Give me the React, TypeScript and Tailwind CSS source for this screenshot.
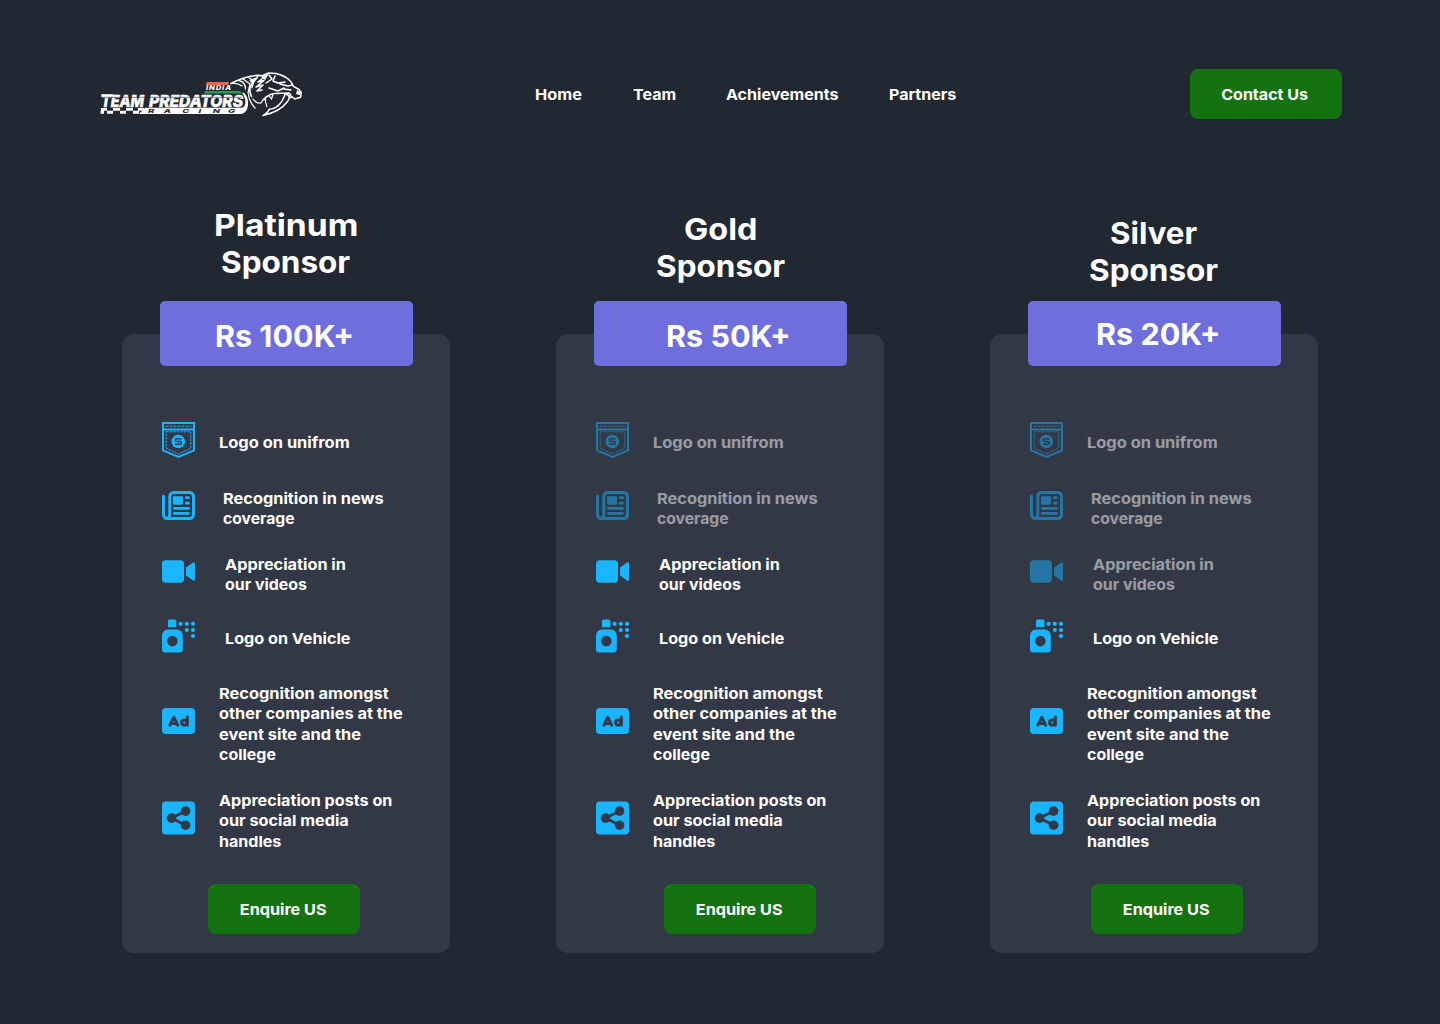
import React from "react";

type Line = [text: string, className: string];

function Logo() {
  return (
    <svg className="block h-[50px] w-[204px]" viewBox="100 70 204 50" fill="none">
      <path d="M207 82h22l-1.200 3H205.600z" fill="#e0703f" />
      <text transform="translate(206 90.200) scale(1.350 1)" fontFamily="Inter" fontWeight="800" fontStyle="italic" fontSize="5.600" textLength="18.500" lengthAdjust="spacing" fill="#fff">INDIA</text>
      <path d="M205 91h35l2.500 2.600H204z" fill="#2f9a55" />
      <g fill="#fff" stroke="#fff" strokeWidth=".5" fontFamily="Inter" fontWeight="800" fontStyle="italic" fontSize="16.500">
        <text x="101" y="106.600" textLength="43" lengthAdjust="spacingAndGlyphs">TEAM</text>
        <text x="149" y="106.600" textLength="94" lengthAdjust="spacingAndGlyphs">PREDATORS</text>
      </g>
      <path d="M101.500 94.300h12l-.600 2.400h-12z" fill="#fff" />
      <path d="M100 97.300h142" stroke="#222831" strokeWidth=".6" />
      <path d="M101 108h6v2.800h-6zM113 108h7v2.800h-7zM126 108h7v2.800h-7zM138 108h6v2.800h-6zM107 110.800h6v2.900h-6zM120 110.800h6v2.900h-6zM133 110.800h6v2.900h-6zM100.500 110.800h3.500v2.900h-3.500z" fill="#fff" />
      <path d="M145 107.800h96c3.500-.300 4.600-2.800 4.300-6.500-.200-3.500-1.300-6-3.300-8.300l1.800-.200c2.800 2.700 4.300 5.700 4.300 10 0 6.500-2.500 11-7.600 11.200H139z" fill="#fff" />
      <text transform="translate(148 112.800) scale(1.800 1)" x="0 8.700 19 28 36 44.500" fontFamily="Inter" fontWeight="800" fontStyle="italic" fontSize="5.200" fill="#222831">RACING</text>
      <g stroke="#fff" strokeLinecap="round" strokeLinejoin="round">
        <path d="M231 83.500c8-4.500 17-7.300 26-8.200l5 .500 6-2.700 8 .300c6 1.500 12 4.300 15 8.500l2.500 4.500 5.500 3.100 2.300 3-.800 4.800-5.500 1.700-3.500-2.300-2.800 2" strokeWidth="1.500" />
        <path d="M231 83.600c4-.5 8 .1 11 2.300M239 80.500c4 1 6.500 3.500 6.500 8.500M243 79l7 5-2 9M249 77.800l5 3-2 7" strokeWidth="1.300" />
        <path d="M258 76c-2 4.500-7 6.500-8 12-.700 4 .500 6 1.500 8.500M264 77l-6 5 6-1.500-8 6.500 7-2-6 6 5-1" strokeWidth="1.600" />
        <path d="M248.500 94c0 6.500 3.500 10.500 6.500 14M253 99c2 3 5 4.500 8 4l2-3.500 6-4" strokeWidth="1.200" />
        <path d="M264 100c2-4 6-6 11-6.500l14-.5 2 2-3 1.800" strokeWidth="1.400" />
        <path d="M269 75l3 4-6 4M275 76l-2 5 5 2 7-1M280 84l8 2 4-1M269 88l9 3 6-3M284 89l7 1" strokeWidth="1.500" />
        <path d="M262 76.500l6-2-3 5zM250 80l6-2-4 5z" fill="#fff" strokeWidth=".8" />
      </g>
      <path d="M285 94c4.500.5 5.500 3.500 2.500 7.500-5 7-13 11.500-24.500 14 4-2.500 5.500-3.500 6.200-6.200 6-.5 12.500-4.500 15.800-15.300z" fill="#222831" stroke="#fff" strokeWidth="1.400" strokeLinejoin="round" />
      <path d="M265.500 96.500c-.500 4 0 7 1.500 10.500M273 94.500l-1.500 4.500-2.500-3.500" stroke="#fff" strokeWidth="1.200" />
      <path d="M297 90l4.500 2.500-1.500 2.500-4-1z" fill="#fff" />
    </svg>
  );
}

function PocketIcon() {
  return (
    <svg className="block h-9 w-[33px]" viewBox="0 0 33 36" fill="none" stroke="#1ab5ff">
      <path d="M1 1h31v27.300L16.500 34.800 1 28.300zM1 7.500h31" strokeWidth="2" />
      <path d="M3.500 4.200h26" strokeDasharray="3 1" />
      <path d="M4.200 9.800h24.600v16.500l-12.300 5.600-12.300-5.600z" strokeDasharray="2.500 1" />
      <circle cx="16.300" cy="19.500" r="6.800" fill="#1ab5ff" stroke="none" />
      <path d="M19.700 16.700h-5.200q-1.300 0-1.300 1.400t1.300 1.400h3.600q1.400 0 1.400 1.400t-1.400 1.400H13" stroke="#333846" strokeWidth="1.400" />
    </svg>
  );
}

function NewsIcon() {
  return (
    <svg className="block h-[29px] w-[33px]" viewBox="0 0 33 29" fill="none" stroke="#1ab5ff" strokeWidth="3" strokeLinecap="round">
      <path d="M1.500 5.300v18.500a3.700 3.700 0 0 0 3.700 3.700h22.600a3.700 3.700 0 0 0 3.700-3.700V5.200a3.700 3.700 0 0 0-3.700-3.700H11.500a3.700 3.700 0 0 0-3.700 3.700v18.600a3.700 3.700 0 0 1-2.500 3.500" />
      <rect x="11" y="5.200" width="10" height="8.500" rx="1.200" fill="#1ab5ff" stroke="none" />
      <path d="M24.200 6.700h2.300M24.200 12.200h2.300M12.300 17.400h14.200M12.300 22.400h14.200" strokeWidth="2.700" />
    </svg>
  );
}

function VideoIcon() {
  return (
    <svg className="block h-[23px] w-[33px]" viewBox="0 0 33 23" fill="#1ab5ff">
      <rect y=".3" width="22" height="22.400" rx="3.600" />
      <path d="M24 7.600l7.100-5.100q1.900-1 1.900.9v16.200q0 1.900-1.900.9L24 15.400z" />
    </svg>
  );
}

function SprayIcon() {
  return (
    <svg className="block h-[34px] w-[33px]" viewBox="0 0 33 34" fill="#1ab5ff">
      <path d="M7.500.6h5.200q1.700 0 1.700 1.700v6H6v-6Q6 .6 7.500.6z" />
      <path fillRule="evenodd" d="M6 10.400h8.800a6 6 0 0 1 6 6v14.200q0 3-3 3H3q-3 0-3-3V16.400a6 6 0 0 1 6-6zM10.400 16.800a5.300 5.300 0 1 0 0 10.600 5.300 5.300 0 0 0 0-10.600z" />
      <circle cx="18.600" cy="4.800" r="2.100" /><circle cx="24.800" cy="4.800" r="2.100" /><circle cx="31" cy="4.800" r="2.100" />
      <circle cx="24.800" cy="11" r="2.100" /><circle cx="31" cy="11" r="2.100" /><circle cx="31" cy="17" r="2.100" />
    </svg>
  );
}

function AdIcon() {
  return (
    <svg className="block h-[26px] w-[33px]" viewBox="0 0 33 26" fill="none" stroke="#333846" strokeWidth="2.900" strokeLinecap="round" strokeLinejoin="round">
      <rect width="33" height="26" rx="3.800" fill="#1ab5ff" stroke="none" />
      <path d="M7.900 17.200l3.900-8 3.900 8M9.500 15.600h4.600" />
      <circle cx="22.200" cy="14.600" r="2.600" />
      <path d="M25.400 9v8.200" />
    </svg>
  );
}

function ShareIcon() {
  return (
    <svg className="block h-[34px] w-[33px]" viewBox="0 0 33 34" fill="#333846">
      <rect y=".5" width="33" height="33" rx="3.800" fill="#1ab5ff" />
      <path d="M23.500 10.200L9.500 17.100l14 7.100" fill="none" stroke="#333846" strokeWidth="2.800" />
      <circle cx="9.600" cy="17.100" r="4.800" /><circle cx="23.600" cy="10.100" r="4.800" /><circle cx="23.600" cy="24.200" r="4.800" />
    </svg>
  );
}

const benefits: { icon: () => React.JSX.Element; row: string; iconPad: string; textPad: string; lines: Line[] }[] = [
  { icon: PocketIcon, row: "h-[60px]", iconPad: "pt-[2px]", textPad: "pt-[13px] pl-[24px]", lines: [["Logo on unifrom", "scale-x-[1.095]"]] },
  { icon: NewsIcon, row: "h-[70px]", iconPad: "pt-[11px]", textPad: "pt-[9px] pl-[28px]", lines: [["Recognition in news", "scale-x-[1.09]"], ["coverage", "scale-x-[1.045]"]] },
  { icon: VideoIcon, row: "h-[65px]", iconPad: "pt-[10px]", textPad: "pt-[5px] pl-[30px]", lines: [["Appreciation in", "scale-x-[1.085]"], ["our videos", "scale-x-[1.06]"]] },
  { icon: SprayIcon, row: "h-[65px]", iconPad: "pt-[4px]", textPad: "pt-[14px] pl-[30px]", lines: [["Logo on Vehicle", "scale-x-[1.077]"]] },
  { icon: AdIcon, row: "h-[105px]", iconPad: "pt-[28px]", textPad: "pt-[4px] pl-[24px]", lines: [["Recognition amongst", "scale-x-[1.092]"], ["other companies at the", "scale-x-[1.09]"], ["event site and the", "scale-x-[1.093]"], ["college", "scale-x-[1.063]"]] },
  { icon: ShareIcon, row: "h-[99px]", iconPad: "pt-[16px]", textPad: "pt-[6px] pl-[24px]", lines: [["Appreciation posts on", "scale-x-[1.077]"], ["our social media", "scale-x-[1.082]"], ["handles", "scale-x-[1.07]"]] },
];

const tiers: { title: Line[]; titlePad: string; price: string; pricePad: string; priceScale: string; dimmed: number; button: string }[] = [
  { title: [["Platinum", "ml-[91.500px] scale-x-[1.12]"], ["Sponsor", "ml-[99px] scale-x-[1.05]"]], titlePad: "pt-[6.6px]", price: "Rs 100K+", pricePad: "pt-[16.6px] pl-[55px]", priceScale: "scale-x-[1.017]", dimmed: 0, button: "ml-[86px]" },
  { title: [["Gold", "ml-[128px] scale-x-[1.08]"], ["Sponsor", "ml-[100px] scale-x-[1.05]"]], titlePad: "pt-[10.6px]", price: "Rs 50K+", pricePad: "pt-[16.6px] pl-[72px]", priceScale: "scale-x-[1.018]", dimmed: 2, button: "ml-[108px]" },
  { title: [["Silver", "ml-[120px] scale-x-[1.04]"], ["Sponsor", "ml-[99px] scale-x-[1.05]"]], titlePad: "pt-[14.6px]", price: "Rs 20K+", pricePad: "pt-[14.6px] pl-[68px]", priceScale: "scale-x-[1.018]", dimmed: 3, button: "ml-[101px]" },
];

export default function App() {
  return (
    <div className="h-[1024px] w-[1440px] overflow-hidden bg-[#222831] font-['Inter',sans-serif] text-[15px] leading-[20.4px] font-bold text-white">
      <header className="flex h-[200px] items-start pt-[69px] pl-[100px] whitespace-nowrap">
        <div className="mt-px w-[434.500px]"><Logo /></div>
        <nav className="flex pt-4">
          <a className="w-[98px] origin-left scale-x-[1.09]">Home</a>
          <a className="w-[93px] origin-left scale-x-[1.07]">Team</a>
          <a className="w-[163px] origin-left scale-x-[1.07]">Achievements</a>
          <a className="w-[301px] origin-left scale-x-[1.07]">Partners</a>
        </nav>
        <button className="flex h-[50px] w-[152px] justify-center rounded-lg bg-[#147310] pt-[15.6px] pr-px"><span className="scale-x-[1.07]">Contact Us</span></button>
      </header>
      <main className="grid grid-cols-[328px_328px_328px] gap-[106px] pl-[122px]">
        {tiers.map((tier) => (
          <section key={tier.price} className="flex flex-col">
            <h2 className={`h-[101px] text-[30px] leading-[37px] ${tier.titlePad}`}>
              {tier.title.map(([text, cls]) => <span key={text} className={`block w-fit origin-left ${cls}`}>{text}</span>)}
            </h2>
            <div className={`z-10 ml-[38px] h-[65px] w-[253px] rounded-[5px] bg-[#6f6edd] text-[30px] leading-[37px] ${tier.pricePad}`}>
              <span className={`block w-fit origin-left ${tier.priceScale}`}>{tier.price}</span>
            </div>
            <div className="-mt-8 h-[619px] rounded-xl bg-[#333846] pt-[86px]">
              <ul className="pl-10 whitespace-nowrap">
                {benefits.map(({ icon: Icon, row, iconPad, textPad, lines }, i) => (
                  <li key={lines[0][0]} className={`flex items-start ${row} ${i < tier.dimmed ? "opacity-50" : ""}`}>
                    <div className={iconPad}><Icon /></div>
                    <p className={textPad}>
                      {lines.map(([text, cls]) => <span key={text} className={`block w-fit origin-left ${cls}`}>{text}</span>)}
                    </p>
                  </li>
                ))}
              </ul>
              <button className={`flex h-[50px] w-[152px] justify-center rounded-lg bg-[#147310] pt-[15.6px] pr-px ${tier.button}`}><span className="scale-x-[1.08]">Enquire US</span></button>
            </div>
          </section>
        ))}
      </main>
    </div>
  );
}
